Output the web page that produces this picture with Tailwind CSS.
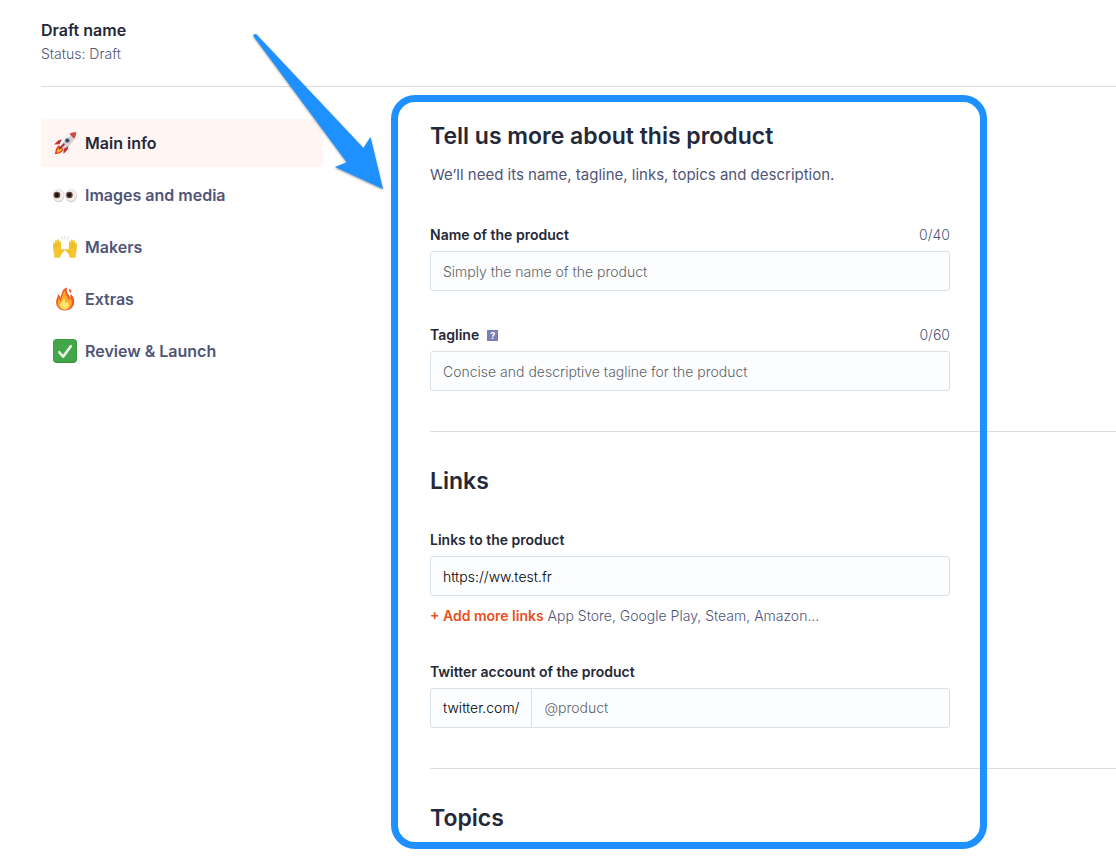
<!DOCTYPE html>
<html lang="en">

<head>
    <meta charset="UTF-8">
    <meta name="viewport" content="width=device-width, initial-scale=1.0">
    <title>Draft name - Main info</title>
    <script src="https://cdn.jsdelivr.net/npm/@tailwindcss/browser@4"></script>
</head>

<body class="relative min-h-screen overflow-x-hidden bg-white font-['Inter','Liberation_Sans',sans-serif] text-[#242838]">

    <header class="ml-[41px] border-b border-[#d9dde0] pt-[18px] pb-5">
        <h1 class="text-base font-semibold leading-6">Draft name</h1>
        <p class="text-sm font-light leading-6 text-[#505577]">Status: Draft</p>
    </header>

    <div class="flex pl-[41px] pt-8">
        <nav class="w-[282px] shrink-0">
            <ul class="space-y-1 font-semibold text-[#505577]">
                <li>
                    <a href="#main" class="flex h-12 items-center gap-2 rounded bg-[#fff6f3] px-3 text-[#242838]">
                        <svg class="size-6" viewBox="0 0 24 24" aria-hidden="true">
                            <path fill="#c5332f" d="M9 8.500 5.500 9.200 1 13.600l5.500-.4zM15.500 14.800l-.8 3.800-4.300 4.300.2-5.300z" />
                            <path fill="#e8432c" d="M6.700 14.200c-2 .6-3.300 2-3.900 4.200-.4 1.700-.6 3.600-1.200 4.900 2.300-.2 4.600-.5 6.500-1.800 1.400-1 2.200-2.500 2.300-4z" />
                            <path fill="#ffc928" d="M6.800 16.400c-1.700.6-2.600 2.500-2.900 5 2.100-.2 4.200-1.200 4.900-3z" />
                            <path fill="#cfd3d8" d="M6.400 14.300C8.500 8.500 12.700 4 18.100 2.300l3.900 3.900c-1.900 5.400-6.400 9.800-12.100 11.700z" />
                            <path fill="#f2f4f5" d="M6.400 14.300C8.500 8.500 12.700 4 18.100 2.300l1.500 1.500C14 6.300 10 10.300 8 15.900z" />
                            <path fill="#d94340" d="M16.500 2.900C18.600 1.700 21 1.200 23.200 1c-.1 2.300-.7 4.700-1.900 6.800z" />
                            <circle cx="14.300" cy="9.500" r="2.500" fill="#8c969e" />
                            <circle cx="14.300" cy="9.500" r="1.600" fill="#353c43" />
                            <path stroke="#a42d2c" stroke-width="2" stroke-linecap="round" d="m10.800 13.400-4.200 4.200" />
                        </svg>
                        Main info
                    </a>
                </li>
                <li>
                    <a href="#media" class="flex h-12 items-center gap-2 px-3">
                        <svg class="size-6" viewBox="0 0 24 24" aria-hidden="true">
                            <ellipse cx="5.700" cy="12.500" rx="5.700" ry="6.800" fill="#d0cbc9" />
                            <ellipse cx="5.600" cy="12" rx="5.200" ry="6.200" fill="#f1edeb" />
                            <ellipse cx="18.200" cy="12.500" rx="5.700" ry="6.800" fill="#d0cbc9" />
                            <ellipse cx="18.100" cy="12" rx="5.200" ry="6.200" fill="#f1edeb" />
                            <circle cx="3.900" cy="12" r="3.300" fill="#67443c" />
                            <circle cx="3.900" cy="12" r="2" fill="#1c1414" />
                            <circle cx="16.400" cy="12" r="3.300" fill="#67443c" />
                            <circle cx="16.400" cy="12" r="2" fill="#1c1414" />
                        </svg>
                        Images and media
                    </a>
                </li>
                <li>
                    <a href="#makers" class="flex h-12 items-center gap-2 px-3">
                        <svg class="size-6" viewBox="0 0 24 24" aria-hidden="true">
                            <g id="hand">
                                <path fill="#f5c62f" d="M1.200 21.500c.5-2.300-.9-4.600-1-7.500L.1 8.500c0-1.200 1.400-1.200 1.600 0l.4-2.300c.3-1.300 1.800-1.100 1.800.1l.4-1.300c.4-1.100 1.900-.8 1.900.4l.1 1.800c.5-1.100 1.800-.8 1.800.4v4.900c.5.900.4 2 .8 2.300.9-.3 1.700-1 2.500-.7.8.3.4 1.200-.2 1.900L8.500 19l-.9 2.500c-.2.900-.5 1.300-1.300 1.300H2.500c-.9 0-1.400-.4-1.300-1.300z" />
                                <path fill="none" stroke="#dfa522" stroke-width=".5" stroke-linecap="round" d="M1.900 9.500v3M4 8.500v3.300M6.200 9v3.200M8.300 14.800c-.9.700-1.500 1.500-1.600 2.800" />
                            </g>
                            <use href="#hand" transform="matrix(-1 0 0 1 24 0)" />
                            <path stroke="#c9ced2" stroke-width=".7" stroke-linecap="round" d="M12 1.200v3M8.400 1.700l1.100 2.700M15.600 1.700l-1.100 2.700" />
                        </svg>
                        Makers
                    </a>
                </li>
                <li>
                    <a href="#extras" class="flex h-12 items-center gap-2 px-3">
                        <svg class="size-6" viewBox="0 0 24 24" aria-hidden="true">
                            <path fill="#ed5a27" d="M11.500 23.400C6.500 23.200 3 19.700 3.100 15c.1-2.700 1.400-4.600 1.900-7 .1-.6.7-.7 1.100-.2.800.9 1 2 1.100 3.100.8-1.800 1.100-3.500 1.700-5.200.7-2.200 1.900-4 4.100-5 .6-.3 1.100.1.900.8-.6 2.100.1 3.900 1.400 5.800.9 1.300 1.500 2.300 1.600 3.600.5-.7.600-1.500.4-2.600-.1-.7.7-1 1.200-.5 1.800 2 2.800 4.400 2.700 7.400-.2 5-4.300 8.400-9.700 8.200z" />
                            <path fill="#ffa62b" d="M11.500 22.500c-4.100 0-6.900-2.800-6.800-6.600 0-2.100.8-3.400 1.200-5 .7 1 .9 2.300 1.200 3.600C9.500 11.400 9 6.500 12 3.600c-.1 3.700 3 5.300 3 9 .9-.2 1.700-.8 2.200-1.600 1.100 1.300 1.700 3 1.700 4.900-.1 4-3.100 6.600-7.400 6.600z" />
                            <path fill="#ffe36e" d="M11.600 22.400c-2.800-.1-4.600-2-4.500-4.400.1-1.700 1-2.800 2.100-4.100.7-.9 1.400-1.800 1.500-3.200 1.800 1.400 2 3.300 1.600 5.400 1-.2 1.600-.8 2-1.600 1.100 1.100 1.700 2.300 1.600 3.700-.1 2.600-1.700 4.300-4.300 4.200z" />
                            <path fill="#ed5a27" d="M17 5.500c-1.200-1.200-1.300-2.800-.1-4 .5 1.200 1.800 1.700 1.600 3.100-.1.700-.8 1.200-1.500.9z" />
                        </svg>
                        Extras
                    </a>
                </li>
                <li>
                    <a href="#review" class="flex h-12 items-center gap-2 px-3">
                        <svg class="size-6" viewBox="0 0 24 24" aria-hidden="true">
                            <rect width="24" height="24" rx="4" fill="#37943c" />
                            <rect x=".6" y=".6" width="22.800" height="22.200" rx="3.500" fill="#43a648" />
                            <path fill="none" stroke="#e3f3e3" stroke-width="2.700" stroke-linecap="round" stroke-linejoin="round" d="m6.300 13.300 3.900 4.300L17.800 7.300" />
                        </svg>
                        Review &amp; Launch
                    </a>
                </li>
            </ul>
        </nav>

        <main class="ml-[107px] min-w-0 flex-1">
            <form>
                <section class="border-b border-[#d9dde0] pb-10">
                    <h2 class="text-[23px] font-semibold leading-[34px]">Tell us more about this product</h2>
                    <p class="mt-[10px] text-[15px] leading-6 text-[#505577]">We’ll need its name, tagline, links, topics and description.</p>

                    <div class="mt-9 max-w-[520px]">
                        <div class="mb-1 flex justify-between text-sm leading-6">
                            <label for="name" class="font-semibold">Name of the product</label>
                            <span class="font-light text-[#505577]">0/40</span>
                        </div>
                        <input id="name" type="text" placeholder="Simply the name of the product"
                            class="block h-10 w-full rounded-[3px] border border-[#d9e1e8] bg-[#fbfdff] px-3 text-sm font-light placeholder:text-[#606468]">
                    </div>

                    <div class="mt-8 max-w-[520px]">
                        <div class="mb-1 flex justify-between text-sm leading-6">
                            <div class="flex items-center gap-2">
                                <label for="tagline" class="font-semibold">Tagline</label>
                                <button type="button" aria-label="Help"
                                    class="flex size-[11px] items-center justify-center bg-[#7a7fb3] text-[9px] font-bold leading-none text-white">?</button>
                            </div>
                            <span class="font-light text-[#505577]">0/60</span>
                        </div>
                        <input id="tagline" type="text" placeholder="Concise and descriptive tagline for the product"
                            class="block h-10 w-full rounded-[3px] border border-[#d9e1e8] bg-[#fbfdff] px-3 text-sm font-light placeholder:text-[#606468]">
                    </div>
                </section>

                <section class="border-b border-[#d9dde0] pt-8 pb-10">
                    <h2 class="text-[23px] font-semibold leading-[34px]">Links</h2>

                    <div class="mt-[30px] max-w-[520px]">
                        <label for="link" class="mb-1 block text-sm font-semibold leading-6">Links to the product</label>
                        <input id="link" type="text" value="https://ww.test.fr"
                            class="block h-10 w-full rounded-[3px] border border-[#d9e1e8] bg-[#fbfdff] px-3 text-sm font-light text-black">
                        <p class="mt-2 text-sm font-light leading-6 text-[#505577]">
                            <button type="button" class="font-semibold text-[#e8501c]">+ Add more links</button>
                            App Store, Google Play, Steam, Amazon...
                        </p>
                    </div>

                    <div class="mt-8 max-w-[520px]">
                        <label for="twitter" class="mb-1 block text-sm font-semibold leading-6">Twitter account of the product</label>
                        <div class="flex h-10 rounded-[3px] border border-[#d9e1e8] bg-[#fbfdff] text-sm font-light text-black">
                            <span class="flex items-center border-r border-[#d9e1e8] px-3">twitter.com/</span>
                            <input id="twitter" type="text" placeholder="@product" aria-label="Twitter account of the product"
                                class="min-w-0 flex-1 px-3 placeholder:text-[#606468]">
                        </div>
                    </div>
                </section>

                <section class="pt-8">
                    <h2 class="text-[23px] font-semibold leading-[34px]">Topics</h2>
                </section>
            </form>
        </main>
    </div>

    <!-- Highlight frame and arrow over the form -->
    <div class="pointer-events-none absolute top-[95px] left-[391px] h-[754px] w-[596px] rounded-[24px] border-7 border-[#1e90ff]"></div>
    <svg class="pointer-events-none absolute top-5 left-60 h-[180px] w-[170px] drop-shadow-[0_1px_1px_rgba(0,0,0,0.4)]" viewBox="0 0 170 180" aria-hidden="true">
        <path fill="#1e90ff" d="M13.500 16.200c-.6-1.500 1.700-3.100 3.100-1.700L123.500 128l7-11L143 169l-48-22 11.700-4.700z" />
    </svg>

</body>

</html>
